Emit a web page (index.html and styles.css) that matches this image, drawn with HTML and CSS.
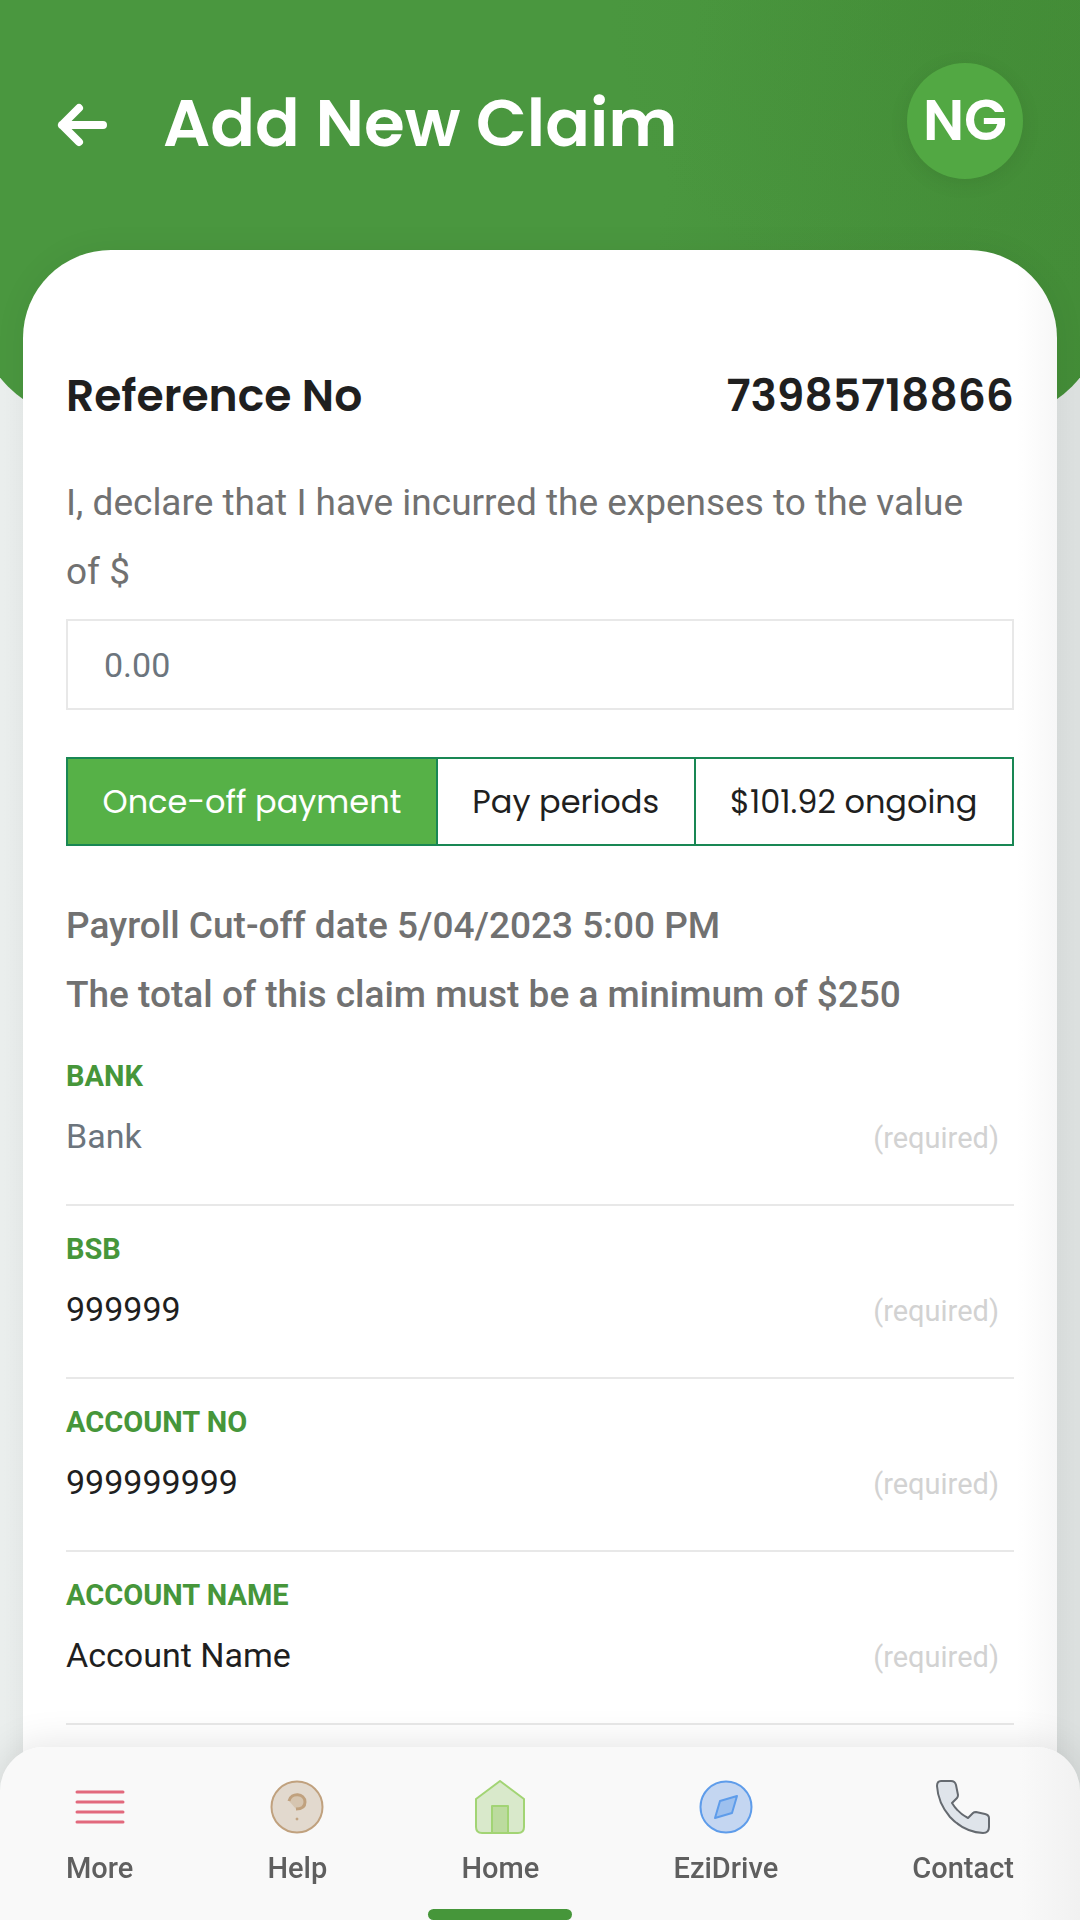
FILE: index.html
```html
<!DOCTYPE html>
<html lang="en">
<head>
  <meta charset="utf-8">
  <meta name="viewport" content="width=device-width, initial-scale=1">
  <title>Add New Claim</title>
  <link rel="stylesheet" href="styles.css">
</head>
<body>
  <header class="header">
    <div class="header-row">
      <a class="back" href="#" aria-label="Back">
        <svg width="50" height="44" viewBox="0 0 50 44" fill="none" stroke="#fff" stroke-width="8" stroke-linecap="round" stroke-linejoin="round">
          <path d="M22 5 5 22l17 17M5 22h41"/>
        </svg>
      </a>
      <h1 class="title">Add New Claim</h1>
      <a class="avatar" href="#">NG</a>
    </div>
  </header>

  <main class="card">
    <div class="reference">
      <h2>Reference No</h2>
      <h2>73985718866</h2>
    </div>

    <form class="claim-form">
      <label class="declare" for="amount">I, declare that I have incurred the expenses to the value of $</label>
      <input class="amount" id="amount" type="text" placeholder="0.00">

      <div class="options">
        <button class="option active" type="button">Once-off payment</button>
        <button class="option" type="button">Pay periods</button>
        <button class="option" type="button">$101.92 ongoing</button>
      </div>

      <p class="note">Payroll Cut-off date 5/04/2023 5:00 PM</p>
      <p class="note">The total of this claim must be a minimum of $250</p>

      <div class="fields">
        <div class="field">
          <label for="bank">BANK</label>
          <div class="field-row">
            <input id="bank" type="text" placeholder="Bank">
            <em>(required)</em>
          </div>
        </div>
        <div class="field">
          <label for="bsb">BSB</label>
          <div class="field-row">
            <input id="bsb" type="text" value="999999">
            <em>(required)</em>
          </div>
        </div>
        <div class="field">
          <label for="account-no">ACCOUNT NO</label>
          <div class="field-row">
            <input id="account-no" type="text" value="999999999">
            <em>(required)</em>
          </div>
        </div>
        <div class="field">
          <label for="account-name">ACCOUNT NAME</label>
          <div class="field-row">
            <input id="account-name" type="text" value="Account Name">
            <em>(required)</em>
          </div>
        </div>
      </div>
    </form>
  </main>

  <nav class="footer-nav">
    <a href="#">
      <svg width="54" height="54" viewBox="0 0 54 54" stroke="#e2697d" stroke-width="3" stroke-linecap="round">
        <path d="M4 12h46M4 22h46M4 32h46M4 42h46"/>
      </svg>
      <span>More</span>
    </a>
    <a href="#">
      <svg width="54" height="54" viewBox="0 0 54 54" fill="none" stroke="#c0a17e" stroke-width="2">
        <circle cx="27" cy="27" r="25.500" fill="#e2d9ce"/>
        <path d="M19 21c2-9 16-8 16 1 0 5-4 7-9 7" fill="#d6c5b0" stroke-width="3"/>
        <circle cx="27" cy="39" r="1" fill="#c0a17e" stroke-width="1"/>
      </svg>
      <span>Help</span>
    </a>
    <a class="current" href="#">
      <svg width="54" height="54" viewBox="0 0 54 54" fill="#d9e9cb" stroke="#a2d474" stroke-width="2" stroke-linejoin="round">
        <path d="M27 1 3 19v28q0 6 6 6h36q6 0 6-6V19z"/>
        <path d="M19 26h16v27H19z" fill="#bcdb9e"/>
      </svg>
      <span>Home</span>
    </a>
    <a href="#">
      <svg width="54" height="54" viewBox="0 0 54 54" fill="#c4d6f1" stroke="#5e9cea" stroke-width="2" stroke-linejoin="round">
        <circle cx="27" cy="27" r="25.500"/>
        <path d="M38 16 21 21 16 38 33 33z" fill="#9dc0ee"/>
      </svg>
      <span>EziDrive</span>
    </a>
    <a href="#">
      <svg width="54" height="54" viewBox="0 0 54 54" fill="#dfe4ea" stroke="#656a70" stroke-width="2" stroke-linejoin="round">
        <path d="M5 1h10q4 0 5 4l2 10q0 2-1 3l-5 5q6 10 16 15l5-5q1-1 3-1l9 2q4 1 4 4v9q0 6-6 6Q28 52 14 37 2 23 1 6q0-5 4-5z"/>
      </svg>
      <span>Contact</span>
    </a>
  </nav>
</body>
</html>
```
FILE: styles.css
```css
* {
  box-sizing: border-box;
}
body {
  display: flex;
  flex-direction: column;
  min-height: 100vh;
  margin: 0;
  overflow-x: hidden;
  background: linear-gradient(to right, #ebefee, #dde1e0);
  font-family: Roboto, sans-serif;
  color: #1f1f1f;
}
a {
  color: inherit;
  text-decoration: none;
}
h1, h2, p {
  margin: 0;
}

/* header */
.header {
  height: 419px;
  margin: 0 -24px;
  padding: 63px 81px 0;
  border-radius: 0 0 110px 110px;
  background:
    radial-gradient(ellipse 340px 300px at 86% 4%, rgba(60, 130, 45, 0.2), transparent),
    linear-gradient(100deg, #4a973f 60%, #438c37);
  color: #fff;
  font-family: Poppins, Inter, sans-serif;
}
.header-row {
  display: flex;
  align-items: center;
}
.back {
  display: flex;
  padding-top: 8px;
}
.title {
  flex: 1;
  margin-left: 56px;
  padding-top: 4px;
  font-size: 66px;
  font-weight: 600;
  line-height: 112px;
}
.avatar {
  width: 116px;
  height: 116px;
  border-radius: 50%;
  background: #52a843;
  box-shadow: 0 4px 20px rgba(0, 0, 0, 0.08);
  font-size: 56px;
  font-weight: 600;
  line-height: 116px;
  text-align: center;
}

/* card */
.card {
  flex: 1;
  margin: -169px 23px 0;
  padding: 110px 43px 173px;
  border-radius: 88px 88px 0 0;
  background: linear-gradient(to left, #f7f7f7, #fff 40px);
  box-shadow: 0 0 32px rgba(0, 0, 0, 0.06);
}
.reference {
  display: flex;
  justify-content: space-between;
  margin-bottom: 36px;
  font-family: Poppins, Inter, sans-serif;
}
.reference h2 {
  font-size: 44px;
  font-weight: 600;
  line-height: 72px;
}
.declare,
.note {
  display: block;
  color: #717171;
  font-size: 37px;
  line-height: 69px;
}
.declare {
  padding-right: 24px;
}
.note {
  font-weight: 500;
}
.amount {
  width: 100%;
  height: 91px;
  margin: 13px 0 47px;
  padding: 0 36px;
  border: 2px solid #e8e8e8;
  background: transparent;
  font-family: inherit;
  font-size: 34px;
}
input::placeholder {
  color: #6c757d;
  opacity: 1;
}
.options {
  display: flex;
  margin-bottom: 45px;
  border: 2px solid #198754;
}
.option {
  flex: auto;
  height: 85px;
  padding: 0;
  border: 0;
  background: none;
  color: #1f1f1f;
  font-family: Poppins, Inter, sans-serif;
  font-size: 32px;
}
.option + .option {
  border-left: 2px solid #198754;
}
.option.active {
  background: #56b147;
  color: #fff;
}

/* fields */
.fields {
  margin-top: 4px;
}
.field {
  height: 173px;
  padding-top: 25px;
  border-bottom: 2px solid #e8e8e8;
}
.field label {
  display: block;
  color: #46963a;
  font-size: 29px;
  font-weight: 700;
  line-height: 36px;
}
.field-row {
  display: flex;
  align-items: baseline;
  padding-right: 15px;
}
.field input {
  flex: 1;
  min-width: 0;
  height: 84px;
  padding: 0;
  border: 0;
  background: none;
  color: #1f1f1f;
  font-family: inherit;
  font-size: 34px;
}
.field em {
  color: #d2d2d2;
  font-size: 29px;
  font-style: normal;
}

/* bottom nav */
.footer-nav {
  position: fixed;
  right: 0;
  bottom: 0;
  left: 0;
  display: flex;
  justify-content: space-between;
  height: 173px;
  padding: 33px 66px 0;
  border-radius: 44px 44px 0 0;
  background: linear-gradient(to left, #f1f1f1, #f9f9f9 60px);
  box-shadow: 0 0 40px rgba(0, 0, 0, 0.12);
}
.footer-nav a {
  position: relative;
  display: flex;
  flex-direction: column;
  align-items: center;
  gap: 14px;
  color: #5f5f5f;
  font-size: 29px;
  font-weight: 500;
  line-height: 40px;
}
.footer-nav .current::after {
  content: "";
  position: absolute;
  bottom: 0;
  width: 144px;
  height: 11px;
  border-radius: 6px;
  background: #46963a;
}
```
